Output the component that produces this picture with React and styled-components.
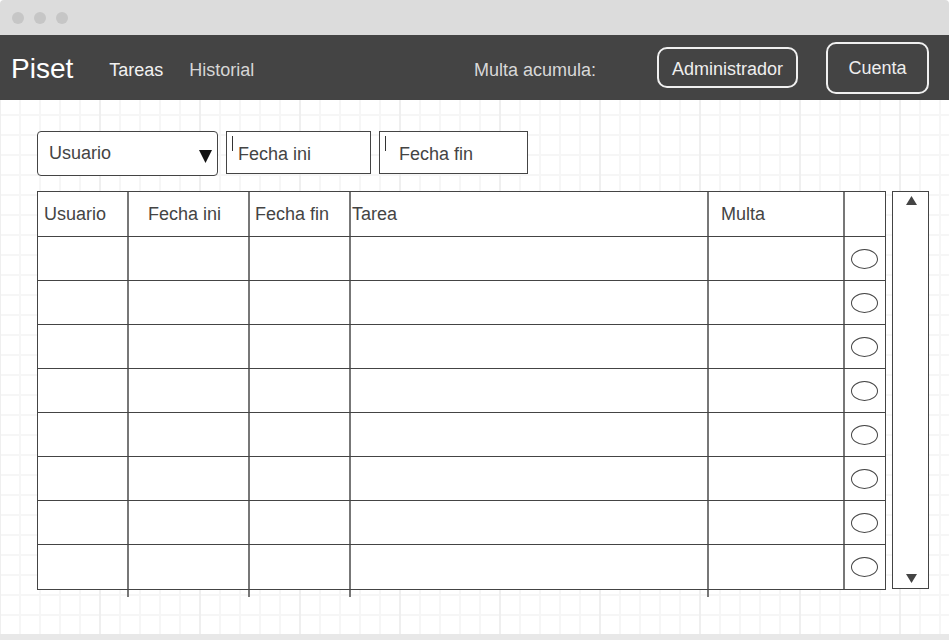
import React from "react";
import styled, { createGlobalStyle } from "styled-components";

const GlobalStyle = createGlobalStyle`
  html, body {
    margin: 0;
    padding: 0;
    background: #ffffff;
  }
  body {
    font-family: "Liberation Sans", Arial, sans-serif;
  }
`;

const Window = styled.div`
  width: 949px;
  height: 640px;
  display: flex;
  flex-direction: column;
  overflow: hidden;
  background: #ffffff;
`;

const TitleBar = styled.div`
  height: 35px;
  flex: none;
  background: #dcdcdc;
  display: flex;
  align-items: center;
  gap: 10px;
  padding-left: 12px;
  box-sizing: border-box;
  border-radius: 4px 4px 0 0;
`;

const Dot = styled.span`
  width: 12px;
  height: 12px;
  border-radius: 50%;
  background: #c6c6c6;
`;

const NavBar = styled.div`
  height: 65px;
  flex: none;
  background: #444444;
  display: flex;
  align-items: center;
  padding: 0 20px 0 11px;
  box-sizing: border-box;
`;

const Brand = styled.div`
  font-size: 28px;
  color: #ffffff;
  margin-right: 36px;
  padding-top: 2px;
`;

const NavLink = styled.div`
  font-size: 18px;
  color: ${({ $active }) => ($active ? "#f2f2f2" : "#d6d6d6")};
  margin-right: 26px;
  padding-top: 6px;
`;

const Fine = styled.div`
  font-size: 18px;
  color: #d8d8d8;
  margin-left: auto;
  margin-right: 61px;
  padding-top: 6px;
`;

const NavButton = styled.div`
  height: ${({ $tall }) => ($tall ? "52px" : "41px")};
  width: ${({ $w }) => $w}px;
  box-sizing: border-box;
  border: 2px solid #f0f0f0;
  border-radius: 10px;
  display: flex;
  align-items: center;
  justify-content: center;
  font-size: 18px;
  color: #eeeeee;
  margin-left: ${({ $gap }) => $gap || 0}px;
  padding-top: ${({ $tall }) => ($tall ? "1px" : "4px")};
`;

const Canvas = styled.div`
  flex: 1;
  padding: 31px 0 0 37px;
  box-sizing: border-box;
  background-color: #ffffff;
  background-image: linear-gradient(to right, #efefef 2px, transparent 2px),
    linear-gradient(to right, #f6f6f6 2px, transparent 2px),
    linear-gradient(to bottom, #f6f6f6 2px, transparent 2px);
  background-size: 100px 100%, 20px 20px, 20px 20px;
  background-position: -1px 0, -1px 0, 0 14px;
`;

const BottomBar = styled.div`
  height: 6px;
  flex: none;
  background: #e8e8e8;
`;

const FilterRow = styled.div`
  display: flex;
  align-items: flex-start;
  gap: 8px;
`;

const Select = styled.div`
  width: 181px;
  height: 45px;
  box-sizing: border-box;
  border: 1px solid #444444;
  border-radius: 4px;
  background: #ffffff;
  display: flex;
  align-items: center;
  justify-content: space-between;
  padding: 0 5px 0 11px;
  font-size: 18px;
  color: #444444;
`;

const Caret = styled.svg`
  width: 13px;
  height: 13px;
  margin-top: 5px;
`;

const Field = styled.div`
  width: ${({ $w }) => $w}px;
  height: 43px;
  box-sizing: border-box;
  border: 1px solid #444444;
  background: #ffffff;
  display: flex;
  align-items: center;
  padding: 3px 0 0 5px;
  font-size: 18px;
  color: #444444;
`;

const Cursor = styled.span`
  width: 1px;
  height: 15px;
  background: #333333;
  align-self: flex-start;
  margin-top: 1px;
`;

const FieldText = styled.span`
  margin-left: ${({ $gap }) => $gap}px;
`;

const TableArea = styled.div`
  display: flex;
  align-items: flex-start;
  gap: 6px;
  margin-top: 15px;
`;

const TableWrap = styled.div`
  display: flex;
  flex-direction: column;
`;

const TableBox = styled.div`
  border: 1px solid #444444;
  background: #ffffff;
`;

const Row = styled.div`
  display: flex;
  height: ${({ $head }) => ($head ? "45px" : "44px")};
  box-sizing: border-box;
  border-bottom: ${({ $last }) => ($last ? "none" : "1px solid #444444")};
`;

const Cell = styled.div`
  width: ${({ $w }) => $w}px;
  flex: none;
  box-sizing: border-box;
  border-right: ${({ $end }) => ($end ? "none" : "2px solid #777777")};
  display: flex;
  align-items: center;
  justify-content: ${({ $center }) => ($center ? "center" : "flex-start")};
  padding-left: ${({ $pad }) => $pad || 0}px;
  padding-right: ${({ $center }) => ($center ? "2px" : "0")};
  font-size: 18px;
  color: #444444;
`;

const Tail = styled.div`
  display: flex;
  height: 7px;
  margin-left: 1px;
`;

const TailCell = styled.div`
  width: ${({ $w }) => $w}px;
  flex: none;
  box-sizing: border-box;
  border-right: ${({ $end }) => ($end ? "none" : "2px solid #777777")};
`;

const Radio = styled.span`
  width: 27px;
  height: 20px;
  box-sizing: border-box;
  border: 1px solid #444444;
  border-radius: 50%;
  background: #ffffff;
`;

const ScrollBar = styled.div`
  width: 37px;
  height: 398px;
  box-sizing: border-box;
  border: 1px solid #444444;
  background: #ffffff;
  display: flex;
  flex-direction: column;
  align-items: center;
  justify-content: space-between;
  padding: 4px 0 5px 1px;
`;

const Arrow = styled.svg`
  width: 11px;
  height: 9px;
`;

const columns = [
  { key: "usuario", title: "Usuario", w: 91, pad: 6 },
  { key: "ini", title: "Fecha ini", w: 121, pad: 19 },
  { key: "fin", title: "Fecha fin", w: 101, pad: 5 },
  { key: "tarea", title: "Tarea", w: 358, pad: 1 },
  { key: "multa", title: "Multa", w: 136, pad: 12 },
  { key: "sel", title: "", w: 40, pad: 0 },
];

const rows = [1, 2, 3, 4, 5, 6, 7, 8];

const App = () => (
  <Window>
    <GlobalStyle />
    <TitleBar>
      <Dot />
      <Dot />
      <Dot />
    </TitleBar>
    <NavBar>
      <Brand>Piset</Brand>
      <NavLink $active>Tareas</NavLink>
      <NavLink>Historial</NavLink>
      <Fine>Multa acumula:</Fine>
      <NavButton $w={141}>Administrador</NavButton>
      <NavButton $w={103} $tall $gap={28}>
        Cuenta
      </NavButton>
    </NavBar>
    <Canvas>
      <FilterRow>
        <Select>
          <span>Usuario</span>
          <Caret viewBox="0 0 13 13">
            <polygon points="0,0 13,0 6.5,13" fill="#111111" />
          </Caret>
        </Select>
        <Field $w={145}>
          <Cursor />
          <FieldText $gap={5}>Fecha ini</FieldText>
        </Field>
        <Field $w={149}>
          <Cursor />
          <FieldText $gap={13}>Fecha fin</FieldText>
        </Field>
      </FilterRow>
      <TableArea>
        <TableWrap>
          <TableBox>
            <Row $head>
              {columns.map((c, i) => (
                <Cell
                  key={c.key}
                  $w={c.w}
                  $pad={c.pad}
                  $end={i === columns.length - 1}
                >
                  {c.title}
                </Cell>
              ))}
            </Row>
            {rows.map((r) => (
              <Row key={r} $last={r === rows.length}>
                {columns.map((c, i) =>
                  i === columns.length - 1 ? (
                    <Cell key={c.key} $w={c.w} $end $center>
                      <Radio />
                    </Cell>
                  ) : (
                    <Cell key={c.key} $w={c.w} />
                  )
                )}
              </Row>
            ))}
          </TableBox>
          <Tail>
            {columns.map((c, i) => (
              <TailCell
                key={c.key}
                $w={c.w}
                $end={i >= columns.length - 2}
              />
            ))}
          </Tail>
        </TableWrap>
        <ScrollBar>
          <Arrow viewBox="0 0 11 9">
            <polygon points="5.5,0 11,9 0,9" fill="#444444" />
          </Arrow>
          <Arrow viewBox="0 0 11 9">
            <polygon points="0,0 11,0 5.5,9" fill="#444444" />
          </Arrow>
        </ScrollBar>
      </TableArea>
    </Canvas>
    <BottomBar />
  </Window>
);

export default App;
